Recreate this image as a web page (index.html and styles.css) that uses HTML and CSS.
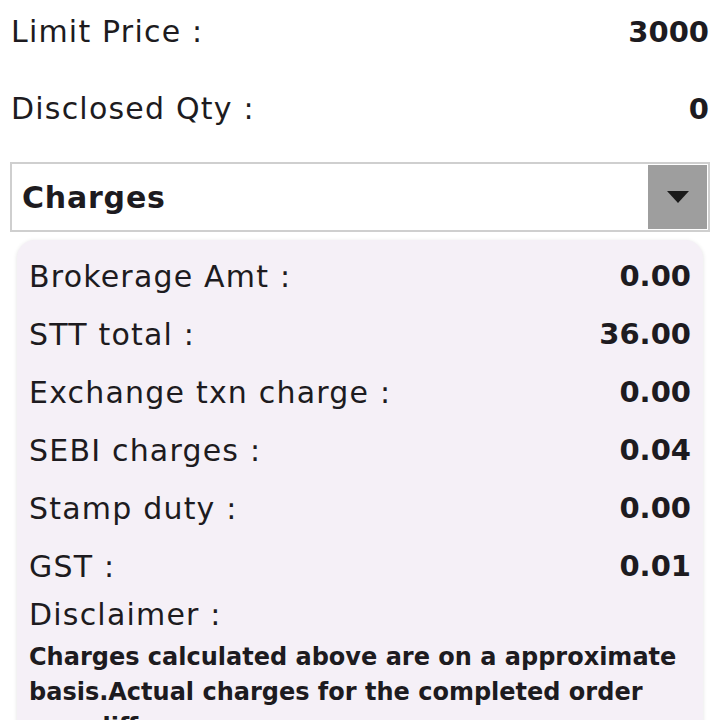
FILE: index.html
```html
<!DOCTYPE html>
<html lang="en">

<head>
    <meta charset="UTF-8" />
    <meta name="viewport" content="width=device-width, initial-scale=1.0" />
    <link rel="stylesheet" href="styles.css">
</head>

<body>
    <main>
        <section class="info">
            <div class="row">
                <span class="label">Limit Price :</span>
                <span class="value">3000</span>
            </div>
            <div class="row">
                <span class="label">Disclosed Qty :</span>
                <span class="value">0</span>
            </div>
        </section>

        <div class="dropdown">
            <span class="dropdown-title">Charges</span>
            <span class="dropdown-btn">
                <svg width="22" height="12" viewBox="0 0 22 12">
                    <path d="M0 0 L22 0 L11 12 Z" fill="#1a1a1a" />
                </svg>
            </span>
        </div>

        <section class="card">
            <div class="row">
                <span class="label">Brokerage Amt :</span>
                <span class="value">0.00</span>
            </div>
            <div class="row">
                <span class="label">STT total :</span>
                <span class="value">36.00</span>
            </div>
            <div class="row">
                <span class="label">Exchange txn charge :</span>
                <span class="value">0.00</span>
            </div>
            <div class="row">
                <span class="label">SEBI charges :</span>
                <span class="value">0.04</span>
            </div>
            <div class="row">
                <span class="label">Stamp duty :</span>
                <span class="value">0.00</span>
            </div>
            <div class="row">
                <span class="label">GST :</span>
                <span class="value">0.01</span>
            </div>
            <div class="disclaimer">
                <span class="label">Disclaimer :</span>
                <p>Charges calculated above are on a approximate basis.Actual charges for the completed order may differ.</p>
            </div>
        </section>
    </main>
</body>

</html>
```

FILE: styles.css
```css
body {
    margin: 0;
    background: #fff;
    color: #1d1b20;
    font-family: "DejaVu Sans", "Open Sans", sans-serif;
    overflow: hidden;
}

main {
    display: flex;
    flex-direction: column;
    padding: 0 11px;
}

.row {
    display: flex;
    justify-content: space-between;
    align-items: center;
}

.label {
    font-size: 30px;
    font-weight: 400;
    letter-spacing: 1.2px;
    white-space: nowrap;
}

.value {
    font-size: 29px;
    font-weight: 700;
}

.info {
    margin-top: -7px;
}

.info .row {
    height: 77px;
}

/* dropdown */
.dropdown {
    display: flex;
    justify-content: space-between;
    align-items: center;
    height: 70px;
    box-sizing: border-box;
    margin: 15px -1px 0 -1px;
    padding: 0 1px 0 10px;
    border: 2px solid #cfcfcf;
}

.dropdown-title {
    font-size: 30px;
    font-weight: 700;
    letter-spacing: 0.8px;
}

.dropdown-btn {
    display: flex;
    justify-content: center;
    align-items: center;
    width: 59px;
    height: 64px;
    background-color: #9e9e9e;
}

/* card */
.card {
    margin: 8px 6px 0 6px;
    padding: 7px 12px 0 12px;
    background-color: #f5f0f7;
    border-radius: 18px;
    box-shadow: 0 1px 4px rgba(0, 0, 0, 0.12);
}

.card .row {
    height: 58px;
}

.disclaimer .label {
    display: block;
    line-height: 40px;
}

.disclaimer p {
    margin: 5px 0 0 0;
    font-size: 24px;
    font-weight: 700;
    line-height: 35px;
}
```
